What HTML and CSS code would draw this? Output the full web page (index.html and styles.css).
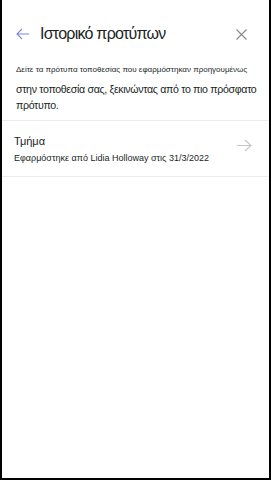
FILE: index.html
```html
<!DOCTYPE html>
<html lang="el">
<head>
<meta charset="utf-8">
<link rel="stylesheet" href="styles.css">
</head>
<body>
<div class="frame">
  <header class="header">
    <button class="icon-btn back" aria-label="Πίσω">
      <svg width="14" height="12" viewBox="0 0 14 12"><path d="M6 1 L1 6 L6 11 M1 6 H13" fill="none" stroke="#7f86e6" stroke-width="1.1"/></svg>
    </button>
    <h1 class="title">Ιστορικό προτύπων</h1>
    <button class="icon-btn close" aria-label="Κλείσιμο">
      <svg width="11" height="11" viewBox="0 0 11 11"><path d="M0.5 0.5 L10.5 10.5 M10.5 0.5 L0.5 10.5" fill="none" stroke="#8a8886" stroke-width="1.1"/></svg>
    </button>
  </header>
  <div class="desc">
    <div class="desc-small">Δείτε τα πρότυπα τοποθεσίας που εφαρμόστηκαν προηγουμένως</div>
    <div class="desc-main">στην τοποθεσία σας, ξεκινώντας από το πιο πρόσφατο πρότυπο.</div>
  </div>
  <ul class="list">
    <li class="item">
      <div class="item-text">
        <div class="item-title">Τμήμα</div>
        <div class="item-sub">Εφαρμόστηκε από Lidia Holloway στις 31/3/2022</div>
      </div>
      <svg class="chev" width="15" height="13" viewBox="0 0 15 13"><path d="M8 1 L14 6.5 L8 12 M0 6.5 H14" fill="none" stroke="#c8c6c4" stroke-width="1.1"/></svg>
    </li>
  </ul>
</div>
</body>
</html>
```
FILE: styles.css
```css
html, body {
  margin: 0;
  padding: 0;
  background: #ffffff;
}
body {
  font-family: "Liberation Sans", Arial, sans-serif;
  color: #201f1e;
}
.frame {
  box-sizing: border-box;
  width: 271px;
  height: 480px;
  border-left: 2px solid #000;
  border-right: 2px solid #000;
  border-bottom: 2px solid #000;
  background: #fff;
}
.header {
  display: flex;
  align-items: center;
  height: 30px;
  padding: 19px 0 0 14px;
}
.icon-btn {
  background: none;
  border: 0;
  padding: 0;
  display: flex;
  align-items: center;
  justify-content: center;
}
.back {
  width: 14px;
  height: 14px;
  margin-right: 10px;
}
.title {
  margin: 0;
  font-size: 16px;
  letter-spacing: -0.75px;
  font-weight: 400;
  flex: 1;
  color: #201f1e;
}
.close {
  width: 11px;
  height: 11px;
  margin-right: 22px;
}
.desc {
  padding: 15px 10px 0 14px;
  height: 56px;
}
.desc-small {
  font-size: 8px;
  line-height: 12px;
  white-space: nowrap;
}
.desc-main {
  font-size: 10.6px;
  letter-spacing: -0.32px;
  line-height: 16px;
  margin-top: 5px;
}
.list {
  list-style: none;
  margin: 0;
  padding: 0;
  border-top: 1px solid #edebe9;
}
.item {
  display: flex;
  align-items: center;
  height: 55px;
  padding: 0 17px 0 12px;
  border-bottom: 1px solid #edebe9;
}
.item-text {
  flex: 1;
}
.item-title {
  font-size: 11px;
  line-height: 14px;
  margin-top: 2px;
}
.item-sub {
  font-size: 9px;
  letter-spacing: 0px;
  line-height: 13px;
  margin-top: 4px;
  white-space: nowrap;
}
.chev {
  margin-top: -6px;
}
```
